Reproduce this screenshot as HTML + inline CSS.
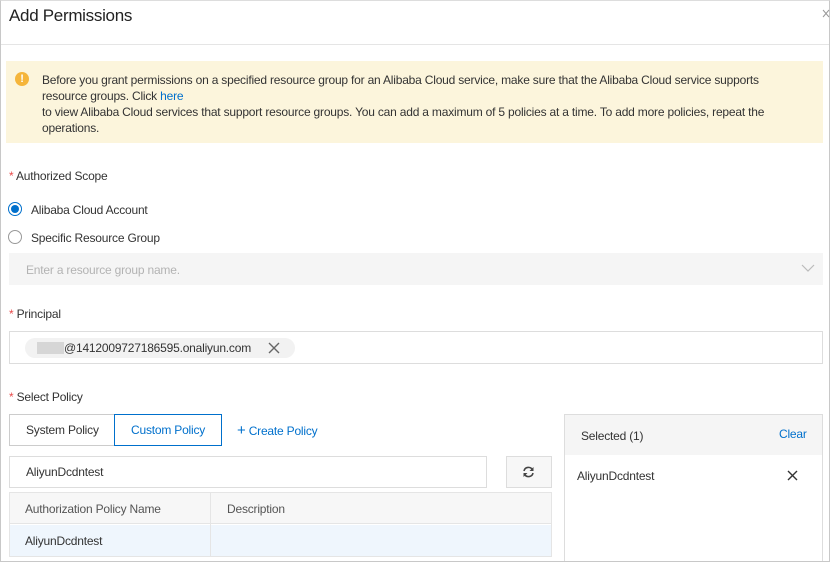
<!DOCTYPE html>
<html><head><meta charset="utf-8"><style>
*{box-sizing:border-box;margin:0;padding:0}
body{width:830px;height:563px;background:#fff;font-family:"Liberation Sans",sans-serif;font-size:12px;color:#333;position:relative;overflow:hidden;letter-spacing:-0.2px}
.a{position:absolute;white-space:nowrap}
.frame{position:absolute;left:0;top:0;width:830px;height:562px;border:1px solid #c8c8c8;border-top:1px solid #ddd}
.req{color:#e84a4a}
.blue{color:#0070cc}
</style></head><body>
<div class="frame"></div>
<div class="a" style="left:9px;top:6px;font-size:17px;color:#222;font-weight:300;letter-spacing:-0.3px">Add Permissions</div>
<svg class="a" style="left:822px;top:9px" width="8" height="9"><path d="M1 1L7 8M7 1L1 8" stroke="#999" stroke-width="1"/></svg>
<div class="a" style="left:1px;top:44px;width:828px;height:1px;background:#e5e5e5"></div>
<div class="a" style="left:6px;top:61px;width:817px;height:82px;background:#fcf5dc"></div>
<div class="a" style="left:15px;top:72px;width:14px;height:14px;border-radius:50%;background:#f5b53b;color:#fff;font-size:11px;font-weight:bold;text-align:center;line-height:14px">!</div>
<div class="a" style="left:42px;top:72px;line-height:16px;color:#333">Before you grant permissions on a specified resource group for an Alibaba Cloud service, make sure that the Alibaba Cloud service supports<br>resource groups. Click <span class="blue">here</span><br>to view Alibaba Cloud services that support resource groups. You can add a maximum of 5 policies at a time. To add more policies, repeat the<br>operations.</div>
<div class="a" style="left:9px;top:169px"><span class="req">*</span> Authorized Scope</div>
<div class="a" style="left:8px;top:202px;width:14px;height:14px;border-radius:50%;border:1px solid #0070cc;"><div style="margin:2px;width:8px;height:8px;border-radius:50%;background:#0070cc"></div></div>
<div class="a" style="left:31px;top:203px">Alibaba Cloud Account</div>
<div class="a" style="left:8px;top:230px;width:14px;height:14px;border-radius:50%;border:1px solid #999"></div>
<div class="a" style="left:31px;top:231px">Specific Resource Group</div>
<div class="a" style="left:9px;top:253px;width:814px;height:32px;background:#f5f5f5"></div>
<div class="a" style="left:26px;top:263px;color:#b3b3b3">Enter a resource group name.</div>
<svg class="a" style="left:801px;top:263px" width="14" height="10"><path d="M1 2 L7 8 L13 2" fill="none" stroke="#bbb" stroke-width="1.2"/></svg>
<div class="a" style="left:9px;top:307px"><span class="req">*</span> Principal</div>
<div class="a" style="left:9px;top:331px;width:814px;height:33px;border:1px solid #ddd"></div>
<div class="a" style="left:25px;top:338px;width:270px;height:20px;border-radius:10px;background:#f2f2f2"></div>
<div class="a" style="left:37px;top:342px;width:27px;height:12px;background:#d6d6d6"></div>
<div class="a" style="left:64px;top:341px;color:#333">@1412009727186595.onaliyun.com</div>
<svg class="a" style="left:268px;top:342px" width="12" height="12"><path d="M1 1L11 11M11 1L1 11" stroke="#666" stroke-width="1.4"/></svg>
<div class="a" style="left:9px;top:390px"><span class="req">*</span> Select Policy</div>
<div class="a" style="left:9px;top:414px;width:106px;height:32px;border:1px solid #ccc;line-height:30px;padding-left:16px">System Policy</div>
<div class="a" style="left:114px;top:414px;width:108px;height:32px;border:1px solid #0070cc;line-height:30px;padding-left:16px;color:#0070cc">Custom Policy</div>
<div class="a" style="left:237px;top:424px;color:#0070cc"><span style="font-size:15px;line-height:12px">+</span> Create Policy</div>
<div class="a" style="left:9px;top:456px;width:478px;height:32px;border:1px solid #ddd;line-height:30px;padding-left:16px">AliyunDcdntest</div>
<div class="a" style="left:506px;top:456px;width:46px;height:32px;border:1px solid #ddd;background:#f7f7f7"></div>
<svg class="a" style="left:522px;top:466px" width="13" height="12" viewBox="0 0 13 12"><path d="M2 5A4.5 4.5 0 0 1 10.5 4M11 7A4.5 4.5 0 0 1 2.5 8" fill="none" stroke="#444" stroke-width="1.6"/><path d="M11.5 1V5H7.5Z M1.5 11V7H5.5Z" fill="#444"/></svg>
<div class="a" style="left:9px;top:492px;width:543px;height:65px;border:1px solid #e5e5e5"></div>
<div class="a" style="left:10px;top:493px;width:541px;height:31px;background:#f7f7f7;border-bottom:1px solid #e5e5e5"></div>
<div class="a" style="left:10px;top:525px;width:541px;height:31px;background:#eff6fd"></div>
<div class="a" style="left:210px;top:493px;width:1px;height:63px;background:#e5e5e5"></div>
<div class="a" style="left:25px;top:502px;color:#555">Authorization Policy Name</div>
<div class="a" style="left:227px;top:502px;color:#555">Description</div>
<div class="a" style="left:25px;top:534px">AliyunDcdntest</div>
<div class="a" style="left:564px;top:414px;width:259px;height:147px;border:1px solid #ddd;border-bottom:none"></div>
<div class="a" style="left:565px;top:415px;width:257px;height:40px;background:#f5f5f5"></div>
<div class="a" style="left:581px;top:429px">Selected (1)</div>
<div class="a" style="left:779px;top:427px;color:#0070cc">Clear</div>
<div class="a" style="left:577px;top:469px">AliyunDcdntest</div>
<svg class="a" style="left:787px;top:470px" width="11" height="11"><path d="M1 1L10 10M10 1L1 10" stroke="#333" stroke-width="1.4"/></svg>
</body></html>
